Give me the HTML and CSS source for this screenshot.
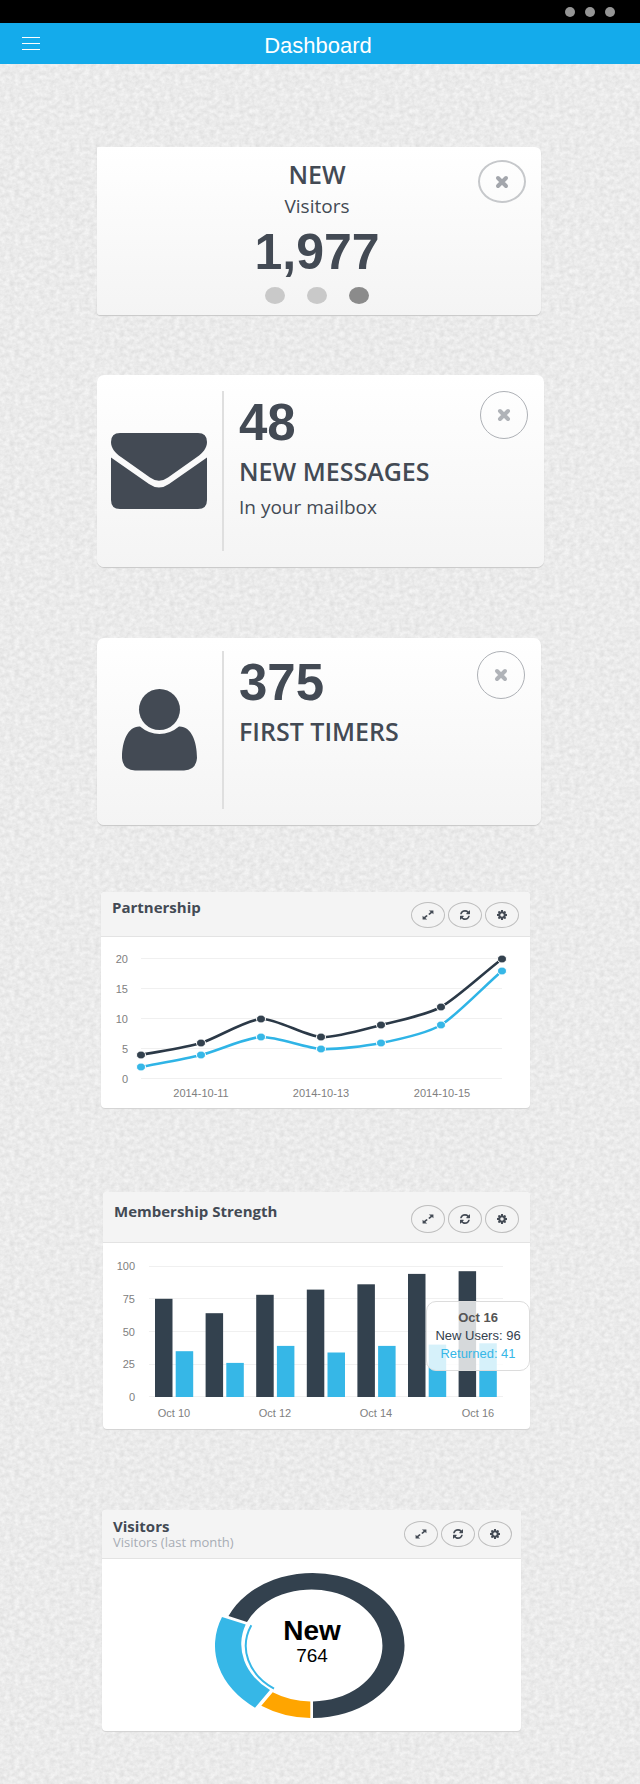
FILE: index.html
```html
<!DOCTYPE html>
<html lang="en">
<head>
<meta charset="utf-8">
<meta name="viewport" content="width=device-width, initial-scale=1">
<title>Dashboard</title>
<link rel="stylesheet" href="styles.css">
</head>
<body>
<svg class="sprite" aria-hidden="true">
  <symbol id="i-close" viewBox="0 0 14 14"><path d="M3 3L11 11M11 3L3 11" fill="none" stroke="currentColor" stroke-width="4" stroke-linecap="round"/></symbol>
  <symbol id="i-expand" viewBox="0 0 14 12"><path d="M8 0.500h5.500v4.600l-1.700-1.400-3 2.300-1.500-1.300 2.900-2.400zM6 11.500H.500V6.900l1.700 1.400 3-2.300 1.500 1.300-2.900 2.400z" fill="currentColor"/></symbol>
  <symbol id="i-refresh" viewBox="0 0 1536 1536"><path fill="currentColor" d="M1511 928q0 5-1 7-64 268-268 434.500t-478 166.500q-146 0-282.500-55t-243.500-157l-129 129q-19 19-45 19t-45-19-19-45v-448q0-26 19-45t45-19h448q26 0 45 19t19 45-19 45l-137 137q71 66 161 102t187 36q134 0 250-65t186-179q11-17 53-117 8-23 30-23h192q13 0 22.500 9.500t9.500 22.500zm25-800v448q0 26-19 45t-45 19h-448q-26 0-45-19t-19-45 19-45l138-138q-148-137-349-137-134 0-250 65t-186 179q-11 17-53 117-8 23-30 23h-199q-13 0-22.500-9.500t-9.500-22.500v-7q65-268 270-434.500t480-166.500q146 0 284 55.500t245 156.500l130-129q19-19 45-19t45 19 19 45z"/></symbol>
  <symbol id="i-gear" viewBox="0 0 1536 1536"><path fill="currentColor" d="M1024 768q0-106-75-181t-181-75-181 75-75 181 75 181 181 75 181-75 75-181zm512-109v222q0 12-8 23t-20 13l-185 28q-19 54-39 91 35 50 107 138 10 12 10 25t-9 23q-27 37-99 108t-94 71q-12 0-26-9l-138-108q-44 23-91 38-16 136-29 186-7 28-36 28h-222q-14 0-24.500-8.500t-11.500-21.500l-28-184q-49-16-90-37l-141 107q-10 9-25 9-14 0-25-11-126-114-165-168-7-10-7-23 0-12 8-23 15-21 51-66.500t54-70.500q-27-50-41-99l-183-27q-13-2-21-12.500t-8-23.500v-222q0-12 8-23t19-13l186-28q14-46 39-92-40-57-107-138-10-12-10-24 0-10 9-23 26-36 98.500-107.500t94.500-71.500q13 0 26 10l138 107q44-23 91-38 16-136 29-186 7-28 36-28h222q14 0 24.500 8.500t11.500 21.500l28 184q49 16 90 37l142-107q9-9 24-9 13 0 25 10 129 119 165 170 7 8 7 22 0 12-8 23-15 21-51 66.500t-54 70.500q26 50 41 98l183 28q13 2 21 12.500t8 23.500z"/></symbol>
</svg>

<div class="statusbar"><i></i><i></i><i></i></div>
<header class="topbar">
  <button class="menu" type="button" aria-label="Menu"><span></span><span></span><span></span></button>
  <h1>Dashboard</h1>
</header>

<main>
  <section class="card card-visitors">
    <div class="summary">
      <h2>NEW</h2>
      <p class="caption">Visitors</p>
      <p class="total">1,977</p>
      <div class="pager">
        <button type="button" aria-label="Slide 1"></button>
        <button type="button" aria-label="Slide 2"></button>
        <button type="button" aria-label="Slide 3" class="active"></button>
      </div>
    </div>
    <button class="close oval" type="button" aria-label="Close"><svg><use href="#i-close"/></svg></button>
  </section>

  <section class="card card-messages">
    <div class="glyph">
      <svg width="96" height="76" viewBox="0 0 96 76" fill="currentColor" aria-hidden="true">
        <path d="M9 0H87Q96 0 96 9C96 15 92 20 86 24L57 44.500Q48 51 39 44.500L10 24C4 20 0 15 0 9Q0 0 9 0Z"/>
        <path d="M0 24.500L38 51Q48 58 58 51L96 24.500V67Q96 76 87 76H9Q0 76 0 67Z"/>
      </svg>
    </div>
    <div class="stat">
      <p class="number">48</p>
      <h2>NEW MESSAGES</h2>
      <p class="note">In your mailbox</p>
    </div>
    <button class="close" type="button" aria-label="Close"><svg><use href="#i-close"/></svg></button>
  </section>

  <section class="card card-timers">
    <div class="glyph">
      <svg width="75" height="82" viewBox="0 0 75 82" fill="currentColor" aria-hidden="true">
        <circle cx="37.500" cy="20.500" r="20.500"/>
        <path d="M18 37.500Q27 45 37.500 45T57 37.500C69 37 75 52 75 69Q74 81 62 81.500H13Q1 81 0 69C0 52 6 37 18 37.500Z"/>
      </svg>
    </div>
    <div class="stat">
      <p class="number">375</p>
      <h2>FIRST TIMERS</h2>
    </div>
    <button class="close" type="button" aria-label="Close"><svg><use href="#i-close"/></svg></button>
  </section>

  <section class="panel panel-partnership">
    <div class="panel-head">
      <div class="titles"><h3>Partnership</h3></div>
      <div class="tools">
        <button type="button" aria-label="Expand"><svg><use href="#i-expand"/></svg></button>
        <button type="button" aria-label="Refresh"><svg><use href="#i-refresh"/></svg></button>
        <button type="button" aria-label="Settings"><svg><use href="#i-gear"/></svg></button>
      </div>
    </div>
    <svg class="chart" viewBox="0 0 429 171" role="img" aria-label="Partnership chart">
      <path class="grid" d="M40 21.500H401M40 51.500H401M40 81.500H401M40 111.500H401M40 141.500H401"/>
      <g class="axis" text-anchor="end">
        <text x="27" y="26">20</text><text x="27" y="56">15</text><text x="27" y="86">10</text><text x="27" y="116">5</text><text x="27" y="146">0</text>
      </g>
      <g class="axis" text-anchor="middle">
        <text x="100" y="160">2014-10-11</text><text x="220" y="160">2014-10-13</text><text x="341" y="160">2014-10-15</text>
      </g>
      <path class="line blue" d="M40 130C55 127 85 121.750 100 118C115 114.250 145 100.750 160 100C175 99.250 205 111.250 220 112C235 112.750 265 109 280 106C295 103 325 97 340 88C355 79 385 47.500 401 34"/>
      <path class="line dark" d="M40 118C55 115 85 110.500 100 106C115 101.500 145 82.750 160 82C175 81.250 205 99.250 220 100C235 100.750 265 91.750 280 88C295 84.250 325 78.250 340 70C355 61.750 385 34 401 22"/>
      <g class="dots blue">
        <ellipse cx="40" cy="130" rx="4.500" ry="4"/><ellipse cx="100" cy="118" rx="4.500" ry="4"/><ellipse cx="160" cy="100" rx="4.500" ry="4"/><ellipse cx="220" cy="112" rx="4.500" ry="4"/><ellipse cx="280" cy="106" rx="4.500" ry="4"/><ellipse cx="340" cy="88" rx="4.500" ry="4"/><ellipse cx="401" cy="34" rx="4.500" ry="4"/>
      </g>
      <g class="dots dark">
        <ellipse cx="40" cy="118" rx="4.500" ry="4"/><ellipse cx="100" cy="106" rx="4.500" ry="4"/><ellipse cx="160" cy="82" rx="4.500" ry="4"/><ellipse cx="220" cy="100" rx="4.500" ry="4"/><ellipse cx="280" cy="88" rx="4.500" ry="4"/><ellipse cx="340" cy="70" rx="4.500" ry="4"/><ellipse cx="401" cy="22" rx="4.500" ry="4"/>
      </g>
    </svg>
  </section>

  <section class="panel panel-membership">
    <div class="panel-head">
      <div class="titles"><h3>Membership Strength</h3></div>
      <div class="tools">
        <button type="button" aria-label="Expand"><svg><use href="#i-expand"/></svg></button>
        <button type="button" aria-label="Refresh"><svg><use href="#i-refresh"/></svg></button>
        <button type="button" aria-label="Settings"><svg><use href="#i-gear"/></svg></button>
      </div>
    </div>
    <div class="chart-wrap">
      <svg class="chart" viewBox="0 0 427 186" role="img" aria-label="Membership chart">
        <path class="grid" d="M46 23.500H400M46 55.500H400M46 88.500H400M46 121.500H400M46 153.500H400"/>
        <g class="axis" text-anchor="end">
          <text x="32" y="27">100</text><text x="32" y="60">75</text><text x="32" y="93">50</text><text x="32" y="125">25</text><text x="32" y="158">0</text>
        </g>
        <g class="axis" text-anchor="middle">
          <text x="71" y="174">Oct 10</text><text x="172" y="174">Oct 12</text><text x="273" y="174">Oct 14</text><text x="375" y="174">Oct 16</text>
        </g>
        <g class="bars dark">
          <rect x="52" y="55.800" width="17.500" height="98.200"/><rect x="102.600" y="70.200" width="17.500" height="83.800"/><rect x="153.200" y="51.800" width="17.500" height="102.200"/><rect x="203.800" y="46.600" width="17.500" height="107.400"/><rect x="254.400" y="41.300" width="17.500" height="112.700"/><rect x="305" y="30.900" width="17.500" height="123.100"/><rect x="355.600" y="28.200" width="17.500" height="125.800"/>
        </g>
        <g class="bars blue">
          <rect x="72.700" y="108.200" width="17.500" height="45.800"/><rect x="123.300" y="119.900" width="17.500" height="34.100"/><rect x="173.900" y="102.900" width="17.500" height="51.100"/><rect x="224.500" y="109.500" width="17.500" height="44.500"/><rect x="275.100" y="102.900" width="17.500" height="51.100"/><rect x="325.700" y="101.600" width="17.500" height="52.400"/><rect x="376.300" y="100.300" width="17.500" height="53.700"/>
        </g>
      </svg>
      <div class="tooltip" role="tooltip">
        <strong>Oct 16</strong>
        <span>New Users: 96</span>
        <span class="returned">Returned: 41</span>
      </div>
    </div>
  </section>

  <section class="panel panel-share">
    <div class="panel-head">
      <div class="titles"><h3>Visitors</h3><p>Visitors (last month)</p></div>
      <div class="tools">
        <button type="button" aria-label="Expand"><svg><use href="#i-expand"/></svg></button>
        <button type="button" aria-label="Refresh"><svg><use href="#i-refresh"/></svg></button>
        <button type="button" aria-label="Settings"><svg><use href="#i-gear"/></svg></button>
      </div>
    </div>
    <svg class="chart" viewBox="0 0 419 172" role="img" aria-label="Visitors by type">
      <path fill="#33414e" d="M211 159A92 72.500 0 1 0 126.500 57L145 63A71 56 0 1 1 211 142.500Z"/>
      <path fill="#36b7e7" d="M120 58A98 77 0 0 0 153 148.700L168 131A71.500 57 0 0 1 143.700 65.500Z"/>
      <path fill="#ffa500" d="M159.300 146.700A92 72.500 0 0 0 208.300 159V142.500A71 56 0 0 1 170.700 133.300Z"/>
      <path fill="none" stroke="#36b7e7" stroke-width="2" d="M149.300 66.300A66 52 0 0 0 172 129.700"/>
      <text class="share-name" x="210" y="81" text-anchor="middle">New</text>
      <text class="share-value" x="210" y="103" text-anchor="middle">764</text>
    </svg>
  </section>
</main>
</body>
</html>
```
FILE: styles.css
```css
* { box-sizing: border-box; }

body {
  margin: 0;
  min-height: 100vh;
  color: #434a54;
  font-family: "Open Sans", "Noto Sans", sans-serif;
  background-color: #ebebeb;
  background-image: url("data:image/svg+xml,%3Csvg xmlns='http://www.w3.org/2000/svg' width='160' height='160'%3E%3Cfilter id='n' x='0' y='0' width='100%25' height='100%25' color-interpolation-filters='sRGB'%3E%3CfeTurbulence type='fractalNoise' baseFrequency='.2 .24' numOctaves='4' seed='4' stitchTiles='stitch'/%3E%3CfeColorMatrix values='.12 0 0 0 .86 .12 0 0 0 .86 .12 0 0 0 .86 0 0 0 0 1'/%3E%3C/filter%3E%3Crect width='160' height='160' filter='url(%23n)'/%3E%3C/svg%3E");
}

h1, h2, h3, p { margin: 0; }

button {
  padding: 0;
  border: 0;
  background: none;
  color: inherit;
  font: inherit;
  cursor: pointer;
}

.sprite { display: none; }

.statusbar {
  display: flex;
  justify-content: flex-end;
  align-items: center;
  gap: 10px;
  height: 23px;
  padding-right: 25px;
  background: #000;
}

.statusbar i {
  width: 10px;
  height: 10px;
  border-radius: 50%;
  background: #959595;
}

.topbar {
  display: grid;
  grid-template-columns: 18px 1fr 18px;
  align-items: center;
  height: 41px;
  padding: 0 26px 0 22px;
  background: #14abeb;
  color: #fff;
}

.topbar h1 {
  padding-top: 4px;
  font: 400 22px/28px "Liberation Sans", Arial, sans-serif;
  text-align: center;
}

.menu {
  display: grid;
  gap: 5px;
}

.menu span {
  height: 1px;
  background: #fff;
}

main {
  display: flex;
  flex-direction: column;
  padding: 83px 96px 53px 97px;
}

.card {
  display: flex;
  align-items: flex-start;
  border-radius: 7px;
  background: linear-gradient(#fff, #f4f4f4);
  box-shadow: 0 1px 1px #c8c8c8;
}

.card h2 {
  font-size: 25px;
  font-weight: 600;
  line-height: 32px;
}

.close {
  display: grid;
  flex: none;
  place-items: center;
  width: 48px;
  height: 48px;
  border: 1px solid #aeb1b6;
  border-radius: 50%;
  color: #b0b3b8;
}

.close svg {
  width: 14px;
  height: 14px;
}

.close.oval {
  height: 43px;
  border-width: 2px;
  border-color: #c6c8cb;
  color: #a3a6ac;
}

.card-visitors {
  margin-right: 3px;
  padding: 13px 15px 11px 59px;
  border-radius: 1px 6px 6px 3px;
}

.summary {
  flex: 1;
  text-align: center;
}

.card-visitors h2 { line-height: 28px; }

.caption {
  margin-top: 6px;
  font-size: 19px;
  line-height: 24px;
}

.total {
  margin-top: 10px;
  font: 700 50px/48px "Liberation Sans", Arial, sans-serif;
}

.pager {
  display: flex;
  justify-content: center;
  gap: 22px;
  margin-top: 11px;
}

.pager button {
  width: 20px;
  height: 17px;
  border-radius: 50%;
  background: #c9c9c9;
}

.pager .active { background: #8b8b8b; }

.card-messages {
  margin-top: 60px;
  padding: 16px 16px 16px 0;
}

.card-timers {
  margin: 71px 3px 0 0;
  padding: 13px 16px 16px 0;
}

.glyph {
  display: flex;
  flex: none;
  align-items: center;
  justify-content: center;
  width: 127px;
  min-height: 160px;
  padding-right: 1px;
  border-right: 2px solid #dfdfdf;
}

.card-timers .glyph { min-height: 158px; }

.stat {
  flex: 1;
  padding: 6px 0 0 15px;
}

.number {
  font: 700 51px/52px "Liberation Sans", Arial, sans-serif;
}

.stat h2 { margin-top: 6px; }

.note {
  margin-top: 6px;
  font-size: 19px;
  line-height: 28px;
}

.panel {
  border-radius: 4px;
  background: #fff;
  box-shadow: 0 1px 1px #d2d2d2;
}

.panel-partnership { margin: 67px 14px 0 4px; }
.panel-membership { margin: 84px 14px 0 6px; }
.panel-share { margin: 81px 23px 0 5px; }

.panel-head {
  display: flex;
  align-items: center;
  justify-content: space-between;
  min-height: 45px;
  padding: 1px 11px 0;
  border-bottom: 1px solid #e3e3e3;
  border-radius: 4px 4px 0 0;
  background: #f4f4f4;
}

.panel-membership .panel-head {
  min-height: 51px;
  padding-top: 3px;
}

.panel-share .panel-head {
  min-height: 49px;
  padding: 0 9px 0 11px;
}

.titles {
  align-self: flex-start;
  padding-top: 5px;
}

.panel-membership .titles,
.panel-share .titles { padding-top: 7px; }

.titles h3 {
  font-size: 15px;
  font-weight: 700;
  line-height: 18px;
}

.titles p {
  color: #a8adb4;
  font-size: 13px;
  line-height: 14px;
}

.tools {
  display: flex;
  gap: 3px;
}

.tools button {
  display: grid;
  place-items: center;
  width: 34px;
  height: 26px;
  border: 1px solid #bebebe;
  border-radius: 50%;
}

.panel-membership .tools button { height: 28px; }

.tools svg {
  width: 12px;
  height: 10px;
}

.chart {
  display: block;
  width: 100%;
}

.chart-wrap { position: relative; }

.grid {
  fill: none;
  stroke: #f0f0f0;
}

.axis {
  fill: #808080;
  font: 11px "Liberation Sans", Arial, sans-serif;
}

.dark { fill: #33414e; }
.blue { fill: #36b7e7; }

.line {
  fill: none;
  stroke-width: 2.6;
}

.line.dark { stroke: #2b3947; }
.line.blue { stroke: #2fb4e6; }

.dots {
  stroke: #fff;
  stroke-width: 1;
}

.tooltip {
  position: absolute;
  top: 58px;
  right: 0;
  display: grid;
  width: 104px;
  padding: 7px 0;
  border: 1px solid #dcdcdc;
  border-radius: 10px;
  background: rgba(255, 255, 255, 0.8);
  color: #33414e;
  font: 13px/18px "Liberation Sans", Arial, sans-serif;
  text-align: center;
  white-space: nowrap;
}

.tooltip strong { color: #555; }
.tooltip .returned { color: #36b7e7; }

.share-name {
  fill: #000;
  font: 700 28px "Liberation Sans", Arial, sans-serif;
}

.share-value {
  fill: #000;
  font: 19px "Liberation Sans", Arial, sans-serif;
}
```
